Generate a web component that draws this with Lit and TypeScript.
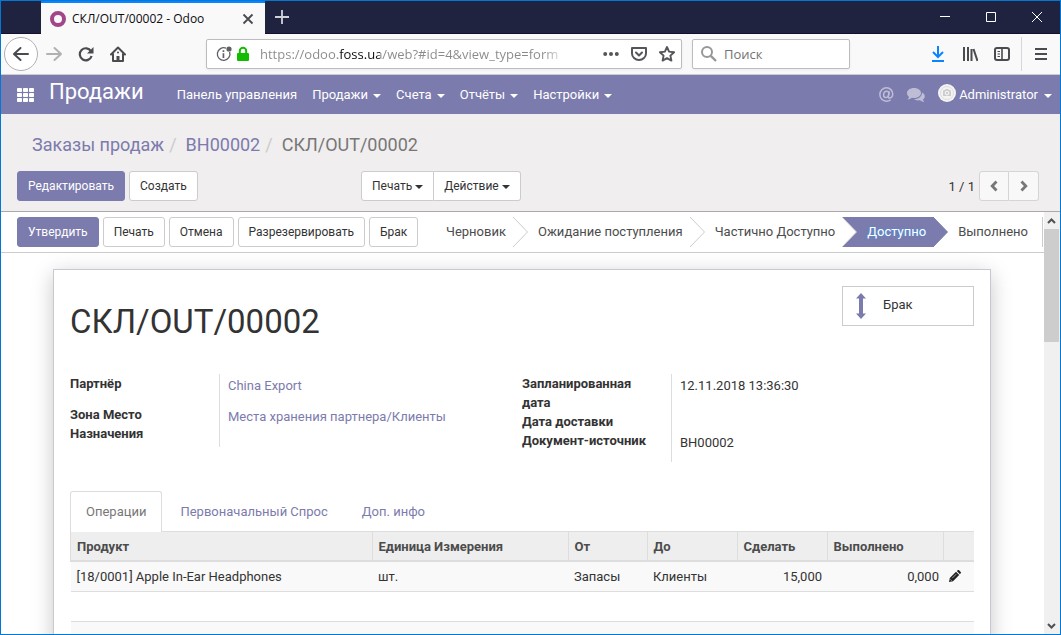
import { LitElement, html, svg, css, nothing } from "lit";
import { customElement, property } from "lit/decorators.js";
import { classMap } from "lit/directives/class-map.js";

/* Window frame: tab strip, address bar and toolbar buttons. */
@customElement("browser-chrome")
class BrowserChrome extends LitElement {
  static styles = css`
    :host {
      display: block;
      font: 12px/16px "Open Sans", "Noto Sans", sans-serif;
      color: #0c0c0d;
    }
    button {
      display: flex;
      align-items: center;
      justify-content: center;
      padding: 0;
      border: 0;
      background: none;
      color: #4a4a4f;
      font: inherit;
    }
    svg {
      display: block;
    }
    .strip {
      display: flex;
      height: 33px;
      padding-left: 40px;
      box-sizing: border-box;
      background: #202340;
      border-bottom: 1px solid #140f2c;
    }
    .tab {
      display: flex;
      align-items: center;
      gap: 6px;
      width: 224px;
      height: 33px;
      padding: 0 9px;
      box-sizing: border-box;
      background: #f9f9fa;
      border-top: 2px solid #0a84ff;
    }
    .tab-title {
      flex: 1;
      white-space: nowrap;
    }
    .new-tab {
      width: 34px;
      color: #d0d1d8;
    }
    .window-buttons {
      display: flex;
      margin-left: auto;
    }
    .window-buttons button {
      width: 46px;
      color: #fff;
    }
    .toolbar {
      display: flex;
      align-items: center;
      height: 41px;
      padding-left: 3px;
      box-sizing: border-box;
      background: #f9f9fa;
      border-bottom: 1px solid #ccc;
    }
    .back {
      width: 34px;
      height: 34px;
      border: 1px solid #b1b1b3;
      border-radius: 50%;
      background: #fff;
    }
    .tool {
      width: 32px;
      height: 32px;
    }
    .forward {
      color: #b1b1b3;
    }
    .field {
      display: flex;
      align-items: center;
      height: 30px;
      box-sizing: border-box;
      background: #fff;
      border: 1px solid #bdbdbf;
      border-radius: 2px;
      box-shadow: 0 1px 3px rgba(0, 0, 0, 0.06);
    }
    .address {
      flex: 1;
      margin-left: 72px;
      padding-left: 9px;
    }
    .address svg {
      flex: none;
    }
    .address button {
      width: 28px;
      color: #55555a;
    }
    input {
      flex: 1;
      min-width: 0;
      padding: 0;
      border: 0;
      outline: 0;
      background: none;
      font: 13px/20px "Open Sans", "Noto Sans", sans-serif;
    }
    .url {
      margin: 0 28px 0 6px;
      color: transparent;
      background: linear-gradient(
        90deg,
        #8a8a8d 0 78px,
        #0c0c0d 78px 120px,
        #8a8a8d 120px 284px,
        #fff 306px
      );
      background-clip: text;
      -webkit-background-clip: text;
    }
    .search {
      width: 158px;
      margin: 0 72px 0 10px;
      padding: 0 8px 0 7px;
    }
    .search input {
      margin-left: 6px;
    }
    .search input::placeholder {
      color: #737373;
      opacity: 1;
    }
    .download {
      color: #0a84ff;
    }
    .menu {
      width: 39px;
      height: 34px;
      border-left: 1px solid #d7d7db;
      margin-left: 3px;
    }
  `;

  render() {
    return html`
      <div class="strip">
        <div class="tab">
          <svg width="16" height="16" viewBox="0 0 16 16" aria-hidden="true">
            <circle cx="8" cy="8" r="6" fill="none" stroke="#a24689" stroke-width="4" />
          </svg>
          <span class="tab-title">СКЛ/OUT/00002 - Odoo</span>
          <button aria-label="Закрыть вкладку">
            <svg width="16" height="16" viewBox="0 0 16 16" fill="none" stroke="currentColor" stroke-width="1.8">
              <path d="M3.5 3.5l9 9M12.5 3.5l-9 9" />
            </svg>
          </button>
        </div>
        <button class="new-tab" aria-label="Новая вкладка">
          <svg width="16" height="16" viewBox="0 0 16 16" fill="none" stroke="currentColor" stroke-width="1.8">
            <path d="M8 1v14M1 8h14" />
          </svg>
        </button>
        <div class="window-buttons">
          <button aria-label="Свернуть">
            <svg width="10" height="10" stroke="currentColor"><path d="M0 4.5h10" /></svg>
          </button>
          <button aria-label="Развернуть">
            <svg width="10" height="10" fill="none" stroke="currentColor"><path d="M.5 .5h9v9h-9z" /></svg>
          </button>
          <button aria-label="Закрыть">
            <svg width="10" height="10" stroke="currentColor"><path d="M0 0l10 10M10 0L0 10" /></svg>
          </button>
        </div>
      </div>
      <div class="toolbar">
        <button class="back" aria-label="Назад">
          <svg width="18" height="16" viewBox="0 0 18 16" fill="none" stroke="currentColor" stroke-width="2" stroke-linecap="round" stroke-linejoin="round">
            <path d="M8.5 2L2 8l6.5 6M2.5 8H16" />
          </svg>
        </button>
        <button class="tool forward" aria-label="Вперёд">
          <svg width="18" height="16" viewBox="0 0 18 16" fill="none" stroke="currentColor" stroke-width="2" stroke-linecap="round" stroke-linejoin="round">
            <path d="M9.5 2L16 8l-6.5 6M15.5 8H2" />
          </svg>
        </button>
        <button class="tool" aria-label="Обновить">
          <svg width="16" height="16" viewBox="0 0 16 16" fill="none" stroke="currentColor" stroke-width="2.2">
            <path d="M13 5.2A6 6 0 1 0 13.6 10" />
            <path d="M15.5 1v6.5H9z" fill="currentColor" stroke="none" />
          </svg>
        </button>
        <button class="tool" aria-label="Домой">
          <svg width="16" height="16" viewBox="0 0 16 16" fill="none" stroke="currentColor" stroke-width="2" stroke-linejoin="round" stroke-linecap="round">
            <path d="M1 8.5L8 1.500l7 7M3 8v7h10V8" />
            <path d="M6.500 15v-5h3v5z" fill="currentColor" stroke="none" />
            <path d="M8 6.500v.1" />
          </svg>
        </button>
        <div class="field address">
          <svg width="16" height="16" viewBox="0 0 16 16" aria-hidden="true">
            <path d="M10 2.2A6.300 6.300 0 1 0 13.600 6" fill="none" stroke="#5f5f63" stroke-width="1.3" />
            <circle cx="13" cy="3" r="2.6" fill="#5f5f63" />
            <path d="M6.600 7.200h1.700v4.800H6.600zM6.600 4.300h1.700V6H6.600z" fill="#5f5f63" />
          </svg>
          <svg width="22" height="16" viewBox="0 0 22 16" aria-hidden="true">
            <rect x="5" y="7" width="12" height="8" rx="1" fill="#12bc00" />
            <path d="M7.800 8V5a3.200 3.200 0 0 1 6.400 0v3" fill="none" stroke="#12bc00" stroke-width="2" />
          </svg>
          <input class="url" aria-label="Адрес" value="https://odoo.foss.ua/web?#id=4&view_type=form" />
          <button aria-label="Действия на странице">
            <svg width="16" height="16" viewBox="0 0 16 16" fill="currentColor">
              <circle cx="2.2" cy="8" r="2" /><circle cx="8" cy="8" r="2" /><circle cx="13.8" cy="8" r="2" />
            </svg>
          </button>
          <button aria-label="Pocket">
            <svg width="16" height="16" viewBox="0 0 16 16" fill="none" stroke="currentColor" stroke-width="2" stroke-linecap="round" stroke-linejoin="round">
              <path d="M1 2h14v5.500a7 6.500 0 0 1-14 0z" />
              <path d="M5 6.500l3 3 3-3" />
            </svg>
          </button>
          <button aria-label="Добавить в закладки">
            <svg width="16" height="16" viewBox="0 0 16 16" fill="none" stroke="currentColor" stroke-width="1.9" stroke-linejoin="round">
              <path d="M8 1l2.100 4.600 5 .6-3.700 3.400 1 5L8 12.100l-4.400 2.500 1-5L.9 6.200l5-.6z" />
            </svg>
          </button>
        </div>
        <div class="field search">
          <svg width="18" height="18" viewBox="0 0 18 18" fill="none" stroke="#97979a" stroke-width="2" aria-hidden="true">
            <circle cx="7" cy="7" r="5" /><path d="M10.800 10.800L16 16" stroke-width="2.4" />
          </svg>
          <input aria-label="Поиск" placeholder="Поиск" />
        </div>
        <button class="tool download" aria-label="Загрузки">
          <svg width="14" height="16" viewBox="0 0 14 16" fill="none" stroke="currentColor" stroke-width="2">
            <path d="M7 0v10M2 6l5 5 5-5M1 15h12" />
          </svg>
        </button>
        <button class="tool" aria-label="Библиотека">
          <svg width="16" height="16" viewBox="0 0 16 16" fill="none" stroke="currentColor" stroke-width="2">
            <path d="M2 1v14M6 1v14M9.500 3v12M11.500 3l4 12" />
          </svg>
        </button>
        <button class="tool" aria-label="Боковая панель">
          <svg width="16" height="16" viewBox="0 0 16 16" fill="none" stroke="currentColor" stroke-width="2">
            <rect x="1" y="2" width="14" height="12" rx="2" />
            <path d="M8 2v12" stroke-width="1.6" />
            <path d="M3.500 5.500H6M3.500 8H6M3.500 10.500H6" stroke-width="1" />
          </svg>
        </button>
        <button class="menu" aria-label="Меню">
          <svg width="12" height="12" fill="none" stroke="currentColor" stroke-width="2">
            <path d="M0 1h12M0 6h12M0 11h12" />
          </svg>
        </button>
      </div>
    `;
  }
}

interface Stage {
  name: string;
  current?: boolean;
}

/* Pipeline of stages, separated by chevrons. */
@customElement("stage-bar")
class StageBar extends LitElement {
  @property({ attribute: false }) stages: Stage[] = [];

  static styles = css`
    :host {
      display: flex;
      height: 30px;
      border-right: 1px solid #ccc;
    }
    button {
      padding: 0 7px 0 10px;
      border: 0;
      background: none;
      color: #4c4c4c;
      font: 13px/20px Roboto, sans-serif;
      white-space: nowrap;
    }
    .current {
      background: #7c7bad;
      color: #fff;
      text-shadow: 0 0 3px #2f9bf0;
    }
    .last {
      padding-right: 14px;
    }
    svg {
      display: block;
      flex: none;
    }
  `;

  private chevron(before: Stage, after: Stage) {
    const back = after.current ? "#7c7bad" : "#fff";
    const front = before.current ? "#7c7bad" : "#fff";
    return html`<svg width="15" height="30" aria-hidden="true">
      <rect width="15" height="30" fill=${back} />
      <path d="M0 0L14.500 15L0 30z" fill=${front} />
      <path d="M0 0L14.500 15L0 30" fill="none" stroke=${before.current ? "#7c7bad" : "#ccc"} />
    </svg>`;
  }

  render() {
    return this.stages.map((stage, i) => {
      const next = this.stages[i + 1];
      return html`<button class=${classMap({ current: !!stage.current, last: !next })}>${stage.name}</button>${next
          ? this.chevron(stage, next)
          : nothing}`;
    });
  }
}

@customElement("app-root")
class AppRoot extends LitElement {
  static styles = css`
    :host {
      display: flex;
      flex-direction: column;
      height: 100vh;
      box-sizing: border-box;
      overflow: hidden;
      border: 1px solid #0078d7;
      background: #fff;
      color: #333;
      font: 13px/19px Roboto, sans-serif;
    }
    a {
      color: #7c7bad;
      text-decoration: none;
    }
    svg {
      display: block;
      flex: none;
    }
    .caret {
      display: inline-block;
      margin-left: 5px;
      border: 4px solid transparent;
      border-top-color: currentColor;
      border-bottom: 0;
      vertical-align: middle;
    }
    .nav {
      display: flex;
      align-items: center;
      height: 39px;
      flex: none;
      padding: 0 8px 0 16px;
      box-sizing: border-box;
      background: #7c7bad;
    }
    .nav a {
      color: #fff;
      white-space: nowrap;
    }
    .nav .brand {
      margin: 0 33px 6px 14px;
      font-size: 22px;
      line-height: 28px;
    }
    .menus {
      display: flex;
      gap: 15px;
    }
    .account {
      display: flex;
      align-items: center;
      gap: 13px;
      margin-left: auto;
    }
    .faded {
      opacity: 0.5;
    }
    .user {
      display: flex;
      align-items: center;
      gap: 3px;
    }
    .user .caret {
      margin-left: 6px;
    }
    .panel {
      flex: none;
      padding: 19px 21px 10px 16px;
      background: #f0eeee;
      border-bottom: 1px solid #aaa;
    }
    .crumbs {
      display: flex;
      margin: 0 0 14px;
      padding: 0 0 0 15px;
      list-style: none;
      font-size: 18px;
      line-height: 24px;
      color: #777;
    }
    .crumbs li + li::before {
      content: "/";
      padding: 0 9px 0 5px;
      color: #ccc;
    }
    .actions {
      display: grid;
      grid-template-columns: minmax(344px, auto) 1fr auto;
    }
    .row {
      display: flex;
      gap: 4px;
    }
    .btn {
      height: 30px;
      padding: 0 10px;
      box-sizing: border-box;
      border: 1px solid #ccc;
      border-radius: 3px;
      background: #fff;
      color: #333;
      font: 12px/18px Roboto, sans-serif;
      white-space: nowrap;
    }
    .primary {
      border-color: #7c7bad;
      background: #7c7bad;
      color: #fff;
    }
    .joined {
      display: flex;
    }
    .joined .btn:first-child {
      border-radius: 3px 0 0 3px;
    }
    .joined .btn:last-child {
      border-left: 0;
      border-radius: 0 3px 3px 0;
    }
    .joined .caret {
      margin-left: 3px;
    }
    .pager {
      display: flex;
      gap: 4px;
      align-items: center;
    }
    .pager .btn {
      display: flex;
      align-items: center;
      justify-content: center;
      width: 30px;
      padding: 0;
      background: #f8f8f8;
      border-color: #d6d5d5;
      color: #777;
    }
    .body {
      display: flex;
      flex: 1;
      min-height: 0;
    }
    .view {
      flex: 1;
      min-width: 0;
      overflow: hidden;
    }
    .status {
      display: flex;
      justify-content: space-between;
      padding: 5px 1px 5px 16px;
      border-bottom: 1px solid #ccc;
    }
    .sheet {
      margin: 16px 53px 0 52px;
      padding: 16px;
      border: 1px solid #c8c8d3;
      background: #fff;
      box-shadow: 0 5px 20px rgba(0, 0, 0, 0.22);
    }
    .head {
      display: flex;
      justify-content: space-between;
      align-items: flex-start;
      margin-bottom: 32px;
    }
    h1 {
      margin: 16px 0 0;
      font-size: 33px;
      line-height: 40px;
      font-weight: 400;
    }
    .stat {
      display: flex;
      align-items: center;
      gap: 17px;
      width: 132px;
      height: 40px;
      padding: 0 13px;
      box-sizing: border-box;
      border: 1px solid #ccc;
      background: #fff;
      color: #333;
      font: inherit;
    }
    .stat span {
      padding-bottom: 3px;
    }
    .groups {
      display: grid;
      grid-template-columns: 1fr 1fr;
      align-items: start;
      margin-bottom: 29px;
    }
    .facts {
      display: grid;
      grid-template-columns: 149px 1fr;
      margin: 0;
    }
    .facts dt {
      padding-right: 15px;
      font-weight: 700;
    }
    .facts dd {
      margin: 0;
      padding: 2px 8px 0;
      border-left: 1px solid #ddd;
    }
    .facts .spaced {
      padding-bottom: 10px;
    }
    .facts .closing {
      padding-bottom: 4px;
    }
    .tabs {
      display: flex;
      gap: 2px;
      border-bottom: 1px solid #ddd;
    }
    .tabs button {
      height: 40px;
      padding: 0 15px;
      border: 1px solid transparent;
      border-bottom: 0;
      border-radius: 3px 3px 0 0;
      background: none;
      color: #7c7bad;
      font: inherit;
    }
    .tabs .open {
      height: 41px;
      margin-bottom: -1px;
      padding-bottom: 1px;
      border-color: #ddd;
      background: #fff;
      color: #777;
    }
    table {
      width: 100%;
      table-layout: fixed;
      border-collapse: collapse;
    }
    th,
    td {
      height: 29px;
      padding: 0 5px 0 6px;
      box-sizing: border-box;
      text-align: left;
      white-space: nowrap;
    }
    th {
      background: #eee;
      border-left: 1px solid #ddd;
      border-bottom: 2px solid #ddd;
      color: #4c4c4c;
      font-weight: 700;
    }
    td {
      height: 30px;
      border-bottom: 1px solid #ddd;
    }
    tbody tr:nth-child(odd) {
      background: #f9f9f9;
    }
    .num {
      text-align: right;
    }
    .num-wide {
      padding-right: 4px;
    }
    .edit {
      display: block;
      padding: 0;
      border: 0;
      background: none;
      color: #222;
    }
    .uom {
      width: 196px;
    }
    .from {
      width: 79px;
    }
    .qty {
      width: 90px;
    }
    .done {
      width: 116px;
    }
    .tools {
      width: 31px;
    }
    .scroll {
      display: flex;
      flex-direction: column;
      width: 16px;
      padding-right: 1px;
      box-sizing: border-box;
      background: #f0f0f0;
    }
    .arrow {
      display: flex;
      align-items: center;
      justify-content: center;
      height: 17px;
      flex: none;
    }
    .track {
      flex: 1;
    }
    .thumb {
      height: 29%;
      background: #cdcdcd;
    }
  `;

  private menus = [
    { name: "Панель управления", drop: false },
    { name: "Продажи", drop: true },
    { name: "Счета", drop: true },
    { name: "Отчёты", drop: true },
    { name: "Настройки", drop: true },
  ];

  private stages: Stage[] = [
    { name: "Черновик" },
    { name: "Ожидание поступления" },
    { name: "Частично Доступно" },
    { name: "Доступно", current: true },
    { name: "Выполнено" },
  ];

  private caret = html`<span class="caret"></span>`;

  private renderNav() {
    return html`<nav class="nav">
      <svg width="18" height="14" viewBox="0 0 18 14" fill="#fff" aria-hidden="true">
        ${[0, 5, 10].map((y) => [0, 6, 12].map((x) => svg`<rect x=${x} y=${y} width="5" height="4" rx=".8" />`))}
      </svg>
      <a class="brand" href="#sales">Продажи</a>
      <div class="menus">
        ${this.menus.map((m) => html`<a href="#menu">${m.name}${m.drop ? this.caret : nothing}</a>`)}
      </div>
      <div class="account">
        <svg class="faded" width="15" height="15" viewBox="0 0 14 14" fill="none" stroke="#fff" stroke-width="1.4" aria-hidden="true">
          <path d="M9.600 4l-.9 4.600c-.2 1.300.4 1.700 1.200 1.600 1.700-.2 2.900-1.700 2.900-3.700A5.700 5.700 0 0 0 7 .8 6.200 6.200 0 0 0 .8 7 6.100 6.100 0 0 0 7 13.200c1.500 0 2.800-.4 3.900-1.300" />
          <path d="M9.200 6c0-1.300-.8-2-1.900-2C5.600 4 4.300 5.500 4.300 7.500c0 1.500.8 2.400 2 2.400C8 9.900 9.200 8 9.200 6z" />
        </svg>
        <svg class="faded" width="18" height="14" viewBox="0 0 18 14" fill="#fff" aria-hidden="true">
          <path d="M7 0c3.900 0 7 2.200 7 5s-3.100 5-7 5c-.7 0-1.300-.1-1.900-.2C3.900 10.700 2.500 11.300 1 11.400c-.3 0-.4-.3-.2-.5.700-.7 1.200-1.100 1.400-2C.9 8 0 6.600 0 5c0-2.800 3.100-5 7-5z" />
          <path d="M15 4.600c1.600.8 2.800 2.100 2.800 3.700 0 1.400-.8 2.500-2 3.300.2.700.6 1.100 1.200 1.700.3.300.1.600-.2.600-1.400-.1-2.700-.7-3.900-1.600-2.600.4-4.500-.1-5.900-1.200C11.200 11 14.900 8.800 15 5z" />
        </svg>
        <a class="user" href="#user">
          <svg width="18" height="22" viewBox="0 0 18 22" aria-hidden="true">
            <circle cx="9" cy="9" r="9" fill="#f4f4f4" />
            <circle cx="9" cy="9" r="6.5" fill="none" stroke="#ddd" />
            <path d="M5 6.500l2-.5.700-1h2.600l.7 1 2 .5V12H5z" fill="#ccc" />
            <circle cx="9" cy="9" r="1.8" fill="#ccc" stroke="#fff" stroke-width=".9" />
          </svg>
          <span>Administrator${this.caret}</span>
        </a>
      </div>
    </nav>`;
  }

  private renderPanel() {
    return html`<header class="panel">
      <ol class="crumbs">
        <li><a href="#orders">Заказы продаж</a></li>
        <li><a href="#order">ВН00002</a></li>
        <li>СКЛ/OUT/00002</li>
      </ol>
      <div class="actions">
        <div class="row">
          <button class="btn primary">Редактировать</button>
          <button class="btn">Создать</button>
        </div>
        <div class="joined">
          <button class="btn">Печать${this.caret}</button>
          <button class="btn">Действие${this.caret}</button>
        </div>
        <div class="pager">
          <span>1 / 1</span>
          <div class="joined">
            <button class="btn" aria-label="Предыдущая">
              <svg width="8" height="12" fill="none" stroke="currentColor" stroke-width="2.8"><path d="M6.500 1.500L2.200 6l4.300 4.500" /></svg>
            </button>
            <button class="btn" aria-label="Следующая">
              <svg width="8" height="12" fill="none" stroke="currentColor" stroke-width="2.8"><path d="M1.500 1.500L5.800 6l-4.300 4.500" /></svg>
            </button>
          </div>
        </div>
      </div>
    </header>`;
  }

  private renderSheet() {
    return html`<article class="sheet">
      <div class="head">
        <h1>СКЛ/OUT/00002</h1>
        <button class="stat">
          <svg width="10" height="26" viewBox="0 0 10 26" fill="#7c7bad" aria-hidden="true">
            <path d="M5 0l5 5.500H7v15h3L5 26l-5-5.500h3v-15H0z" />
          </svg>
          <span>Брак</span>
        </button>
      </div>
      <div class="groups">
        <dl class="facts">
          <dt class="spaced">Партнёр</dt>
          <dd class="spaced"><a href="#partner">China Export</a></dd>
          <dt class="closing">Зона Место Назначения</dt>
          <dd class="closing"><a href="#location">Места хранения партнера/Клиенты</a></dd>
        </dl>
        <dl class="facts">
          <dt>Запланированная дата</dt>
          <dd>12.11.2018 13:36:30</dd>
          <dt>Дата доставки</dt>
          <dd></dd>
          <dt class="spaced">Документ-источник</dt>
          <dd class="spaced">ВН00002</dd>
        </dl>
      </div>
      <div class="tabs" role="tablist">
        <button class="open" role="tab" aria-selected="true">Операции</button>
        <button role="tab">Первоначальный Спрос</button>
        <button role="tab">Доп. инфо</button>
      </div>
      <table>
        <thead>
          <tr>
            <th>Продукт</th>
            <th class="uom">Единица Измерения</th>
            <th class="from">От</th>
            <th class="qty">До</th>
            <th class="qty">Сделать</th>
            <th class="done">Выполнено</th>
            <th class="tools"></th>
          </tr>
        </thead>
        <tbody>
          <tr>
            <td>[18/0001] Apple In-Ear Headphones</td>
            <td>шт.</td>
            <td>Запасы</td>
            <td>Клиенты</td>
            <td class="num">15,000</td>
            <td class="num num-wide">0,000</td>
            <td>
              <button class="edit" aria-label="Изменить">
                <svg width="12" height="12" viewBox="0 0 12 12" fill="currentColor">
                  <path d="M0 12l.8-4L7 1.800 10.200 5 4 11.200zM7.800 1.100l.9-.8c.4-.4 1-.4 1.400 0l1.600 1.600c.4.400.4 1 0 1.400l-.8.9z" />
                  <path d="M1.200 9.300l1.500 1.500M3.200 8.200l4-4" stroke="#f9f9f9" stroke-width=".6" />
                </svg>
              </button>
            </td>
          </tr>
          <tr><td colspan="7"></td></tr>
          <tr><td colspan="7"></td></tr>
        </tbody>
      </table>
    </article>`;
  }

  render() {
    return html`
      <browser-chrome></browser-chrome>
      ${this.renderNav()} ${this.renderPanel()}
      <div class="body">
        <main class="view">
          <div class="status">
            <div class="row">
              <button class="btn primary">Утвердить</button>
              <button class="btn">Печать</button>
              <button class="btn">Отмена</button>
              <button class="btn">Разрезервировать</button>
              <button class="btn">Брак</button>
            </div>
            <stage-bar .stages=${this.stages}></stage-bar>
          </div>
          ${this.renderSheet()}
        </main>
        <div class="scroll" aria-hidden="true">
          <div class="arrow">
            <svg width="9" height="6" fill="none" stroke="#505050" stroke-width="2"><path d="M1 5l3.500-3.500L8 5" /></svg>
          </div>
          <div class="track"><div class="thumb"></div></div>
          <div class="arrow">
            <svg width="9" height="6" fill="none" stroke="#505050" stroke-width="2"><path d="M1 1l3.500 3.500L8 1" /></svg>
          </div>
        </div>
      </div>
    `;
  }
}
